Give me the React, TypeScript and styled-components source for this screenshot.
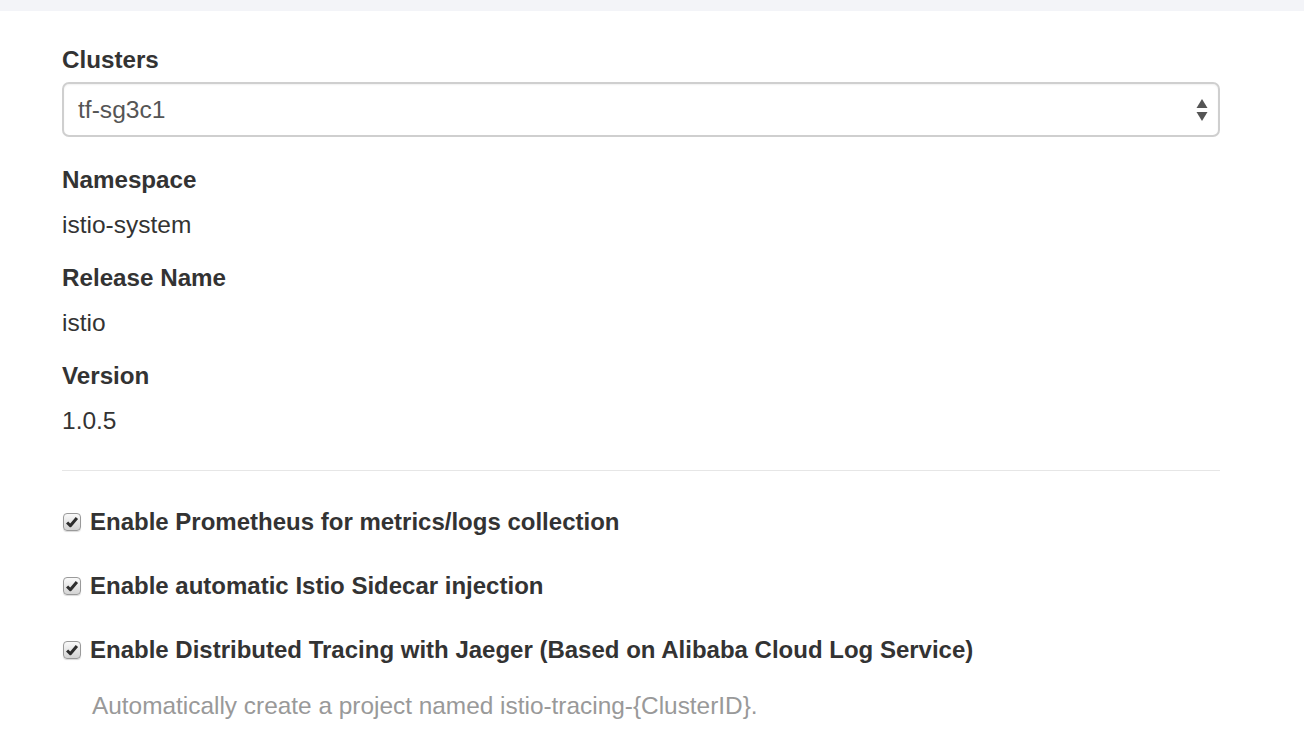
import React from "react";
import styled, { createGlobalStyle } from "styled-components";

const Global = createGlobalStyle`
  html, body { margin: 0; padding: 0; background: #fff; }
  body { font-family: "Liberation Sans", Arial, sans-serif; color: #333; }
`;

const TopBand = styled.div`
  height: 11px;
  background: #f3f4f8;
`;

const Form = styled.div`
  padding: 34px 84px 0 62px;
  width: 1158px;
`;

const Group = styled.div<{ $mb?: number }>`
  display: flex;
  flex-direction: column;
  margin-bottom: ${(p) => p.$mb ?? 23.5}px;
`;

const Label = styled.div`
  font-size: 24.2px;
  font-weight: 700;
  line-height: 30px;
  color: #333;
`;

const Value = styled.div`
  font-size: 24.5px;
  line-height: 30px;
  color: #333;
  margin-top: 14.5px;
`;

const SelectBox = styled.div`
  margin-top: 7px;
  height: 51px;
  border: 2px solid #cfcfcf;
  border-radius: 7px;
  display: flex;
  align-items: center;
  justify-content: space-between;
  padding: 0 10px 0 14px;
  font-size: 24.6px;
  color: #555;
  box-shadow: inset 0 1px 2px rgba(0, 0, 0, 0.06);
`;

const Divider = styled.hr`
  border: 0;
  border-top: 1px solid #e6e6e6;
  margin: 34px 0 36px;
`;

const CheckRow = styled.label`
  display: flex;
  align-items: center;
  gap: 9px;
  font-size: 24px;
  font-weight: 700;
  line-height: 30px;
  color: #333;
  margin-bottom: 34px;
`;

const Box = styled.span`
  box-sizing: border-box;
  width: 18px;
  height: 18px;
  margin-left: 1px;
  border: 1px solid #9a9a9a;
  border-radius: 4px;
  background: linear-gradient(#fafafa, #d4d4d4);
  display: inline-flex;
  align-items: center;
  justify-content: center;
  box-shadow: 0 1px 1px rgba(0, 0, 0, 0.15);
  flex: none;
`;

const Help = styled.div`
  font-size: 24.4px;
  line-height: 30px;
  color: #999;
  margin: -8px 0 0 30px;
`;

const Check = () => (
  <Box>
    <svg width="14" height="14" viewBox="0 0 12 12">
      <path d="M1.8 6.4 L4.6 9.2 L10.2 2.6" fill="none" stroke="#2e2e2e" strokeWidth="2.6" strokeLinejoin="round" />
    </svg>
  </Box>
);

const Arrows = () => (
  <svg width="12" height="26" viewBox="0 0 12 26">
    <path d="M6 2 L11.5 11 L0.5 11 Z" fill="#555" />
    <path d="M0.5 15 L11.5 15 L6 24 Z" fill="#555" />
  </svg>
);

export default function App() {
  return (
    <>
      <Global />
      <TopBand />
      <Form>
        <Group $mb={28}>
          <Label>Clusters</Label>
          <SelectBox>
            <span>tf-sg3c1</span>
            <Arrows />
          </SelectBox>
        </Group>
        <Group>
          <Label>Namespace</Label>
          <Value>istio-system</Value>
        </Group>
        <Group>
          <Label>Release Name</Label>
          <Value>istio</Value>
        </Group>
        <Group $mb={0}>
          <Label>Version</Label>
          <Value>1.0.5</Value>
        </Group>
        <Divider />
        <CheckRow>
          <Check />
          Enable Prometheus for metrics/logs collection
        </CheckRow>
        <CheckRow>
          <Check />
          Enable automatic Istio Sidecar injection
        </CheckRow>
        <CheckRow>
          <Check />
          Enable Distributed Tracing with Jaeger (Based on Alibaba Cloud Log Service)
        </CheckRow>
        <Help>Automatically create a project named istio-tracing-{"{ClusterID}"}.</Help>
      </Form>
    </>
  );
}
